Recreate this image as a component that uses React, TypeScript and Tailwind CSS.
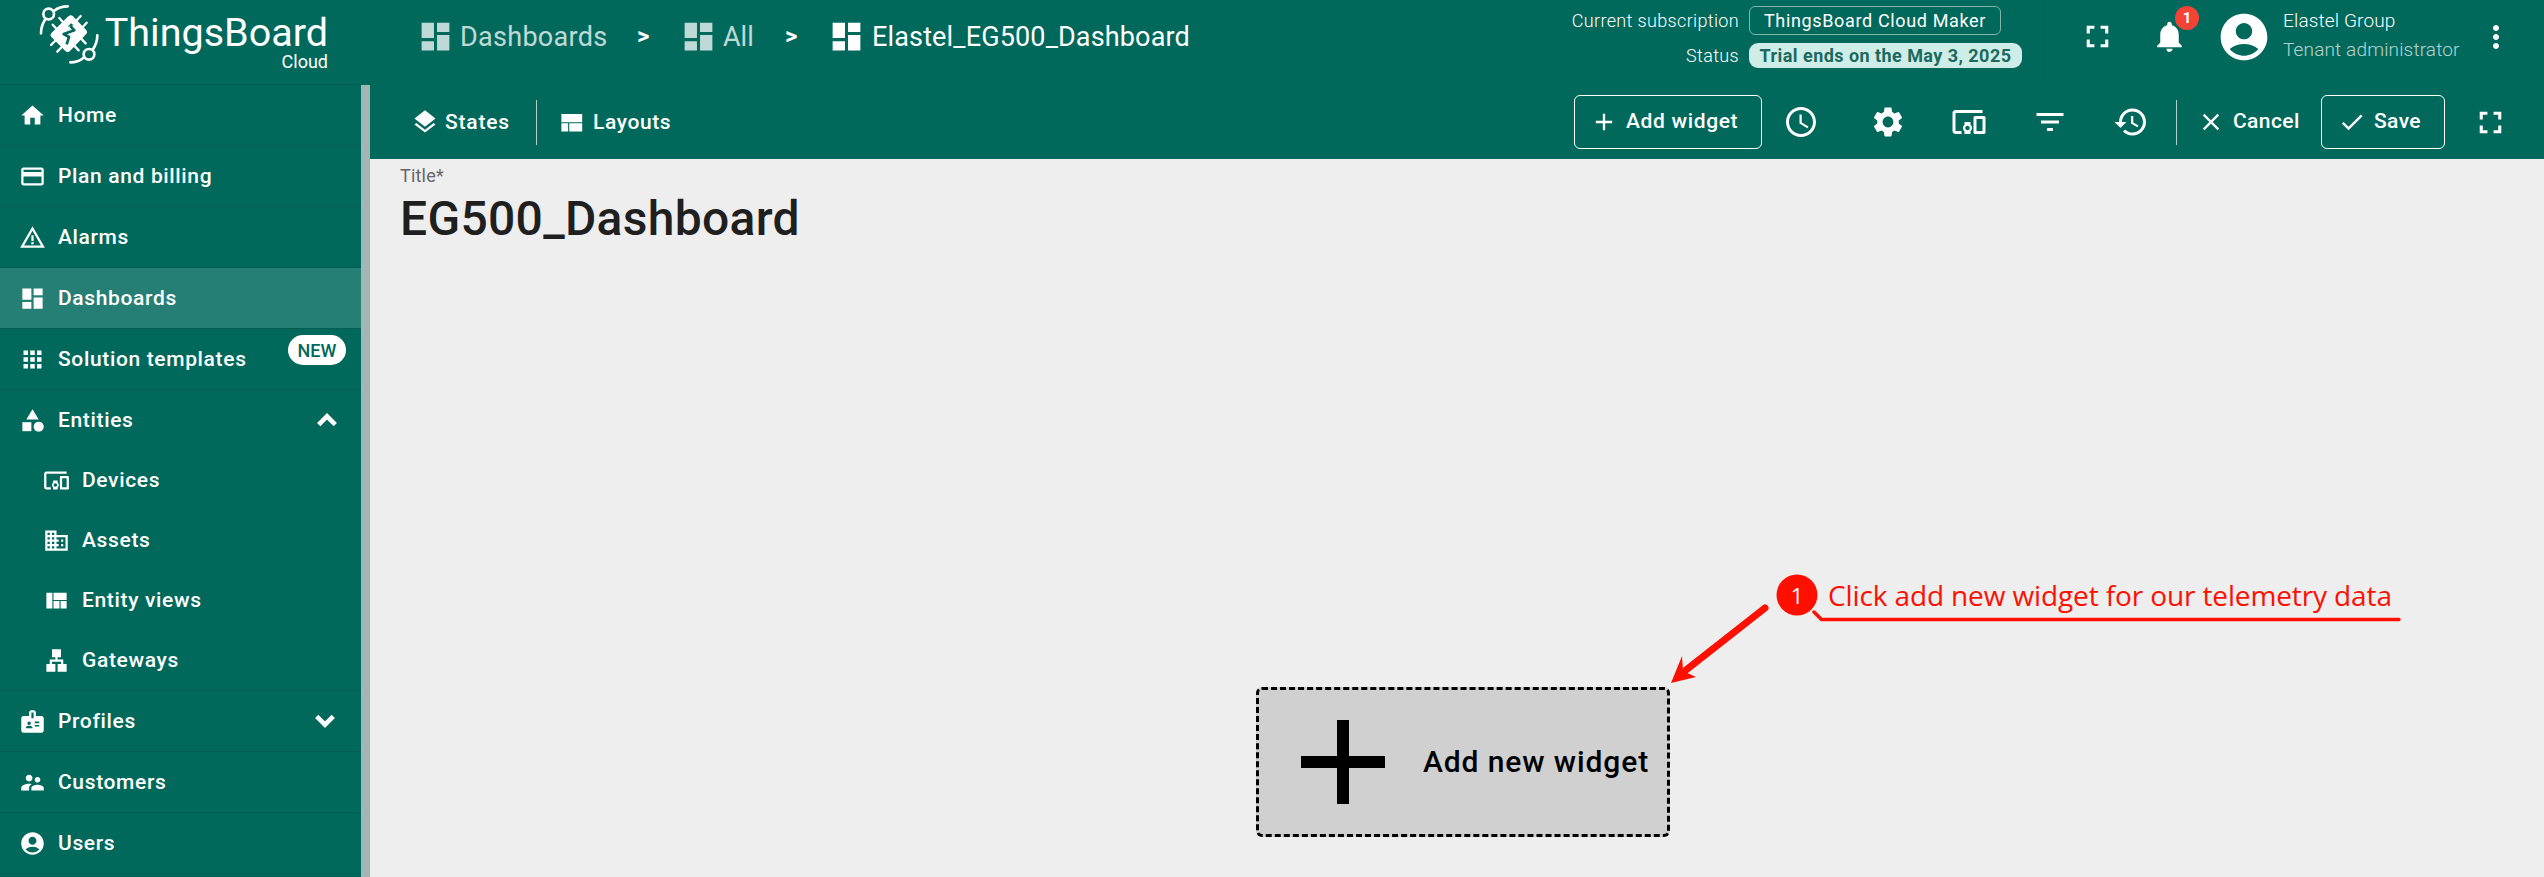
import type { ReactNode } from "react";
import type { IconType } from "react-icons";
import {
  MdAccountCircle,
  MdAdd,
  MdApps,
  MdBadge,
  MdCategory,
  MdCheck,
  MdClose,
  MdDashboard,
  MdDevicesOther,
  MdDomain,
  MdFilterList,
  MdFullscreen,
  MdHistory,
  MdHome,
  MdLan,
  MdLayers,
  MdMoreVert,
  MdNotifications,
  MdPayment,
  MdSchedule,
  MdSettings,
  MdSupervisorAccount,
  MdViewQuilt,
  MdWarningAmber,
} from "react-icons/md";

function Logo() {
  return (
    <div className="flex h-[85px] w-[361px] shrink-0 border-b border-[#005e50] pl-[37px]">
      <svg className="mt-[2px] h-[64px] w-[64px] shrink-0" viewBox="111 6 192 192" fill="none" stroke="white" strokeLinecap="round">
        <g strokeWidth="8">
          <circle cx="146" cy="42" r="16" />
          <circle cx="267" cy="163" r="16" />
          <path d="M123 100C123 84 128 70 136 58" />
          <path d="M163 32C174 23 188 19 203 19" />
          <path d="M292 106C292 123 287 137 278 149" />
          <path d="M211 187C227 187 240 182 251 173" />
        </g>
        <path
          strokeWidth="7"
          d="M178 54L196 74M158 74L176 94M242 48L222 70M260 68L238 92M153 135L174 114M172 155L194 132M222 136L236 151M240 112L257 130"
        />
        <path d="M205 49Q212 43 219 49L258 89Q265 96 258 103L210 153Q203 160 196 153L155 112Q148 105 155 98Z" fill="white" stroke="none" />
        <path d="M211 78L223 91L191 102L207 111L200 133" stroke="#00695c" strokeWidth="8" strokeLinecap="butt" strokeLinejoin="round" />
        <path d="M203 80L213 70L221 76Z" fill="#00695c" stroke="none" />
      </svg>
      <div className="flex w-[227px] flex-col items-end pt-[13px] text-white">
        <span className="text-[39.5px] leading-[40px]">ThingsBoard</span>
        <span className="text-[18px] leading-[17px]">Cloud</span>
      </div>
    </div>
  );
}

function Chevron({ up = false }: { up?: boolean }) {
  return (
    <svg className={up ? "mr-[24px] h-[14px] w-[20px]" : "mr-[26px] h-[14px] w-[20px]"} viewBox="0 0 20 14" fill="none" stroke="white" strokeWidth="4.6">
      <path d={up ? "M1.7 11.6L10 3.3L18.3 11.6" : "M1.7 2.4L10 10.7L18.3 2.4"} />
    </svg>
  );
}

type NavProps = {
  icon: IconType;
  label: string;
  active?: boolean;
  child?: boolean;
  line?: boolean;
  children?: ReactNode;
};

function NavItem({ icon: Icon, label, active, child, line = true, children }: NavProps) {
  return (
    <div
      className={`flex shrink-0 items-center ${line ? "h-[61px] border-b border-[#005e50]" : "h-[60px]"} ${active ? "bg-[#267f74]" : ""} ${child ? "pl-[43px]" : "pl-[19px]"}`}
    >
      <Icon className="size-[27px] shrink-0" />
      <span className="ml-[12px] grow pt-[2px] text-[21px] font-medium tracking-[0.65px] whitespace-nowrap">{label}</span>
      {children}
    </div>
  );
}

function Sidebar() {
  return (
    <aside className="flex h-[877px] w-[370px] shrink-0 flex-col overflow-hidden">
      <Logo />
      <div className="flex min-h-0 grow">
        <nav className="flex w-[361px] flex-col overflow-hidden">
          <NavItem icon={MdHome} label="Home" />
          <NavItem icon={MdPayment} label="Plan and billing" />
          <NavItem icon={MdWarningAmber} label="Alarms" />
          <NavItem icon={MdDashboard} label="Dashboards" active />
          <NavItem icon={MdApps} label="Solution templates">
            <span className="mr-[15px] mb-[19px] flex h-[30px] w-[58px] items-center justify-center rounded-full bg-white pt-px text-[18px] font-medium text-[#00695c]">
              NEW
            </span>
          </NavItem>
          <NavItem icon={MdCategory} label="Entities" line={false}>
            <Chevron up />
          </NavItem>
          <NavItem icon={MdDevicesOther} label="Devices" child line={false} />
          <NavItem icon={MdDomain} label="Assets" child line={false} />
          <NavItem icon={MdViewQuilt} label="Entity views" child line={false} />
          <NavItem icon={MdLan} label="Gateways" child />
          <NavItem icon={MdBadge} label="Profiles">
            <Chevron />
          </NavItem>
          <NavItem icon={MdSupervisorAccount} label="Customers" />
          <NavItem icon={MdAccountCircle} label="Users" />
        </nav>
        <div className="w-[9px] bg-[#a2b6b4]" />
      </div>
    </aside>
  );
}

function Header() {
  return (
    <header className="flex h-[85px] shrink-0 text-white">
      <div className="flex h-[73px] w-[1175px] items-center pl-[47px] text-[27px]">
        <div className="flex w-[220px] items-center opacity-75">
          <MdDashboard className="size-[37px]" />
          <span className="ml-[6px] pt-[2px] tracking-[0.3px]">Dashboards</span>
        </div>
        <span className="w-[43px] pb-[2px] text-[24px] leading-[30px] font-bold">&gt;</span>
        <div className="flex w-[105px] items-center opacity-75">
          <MdDashboard className="size-[37px]" />
          <span className="ml-[6px] pt-[2px]">All</span>
        </div>
        <span className="w-[43px] pb-[2px] text-[24px] leading-[30px] font-bold">&gt;</span>
        <MdDashboard className="size-[37px]" />
        <span className="ml-[7px] pt-[2px] tracking-[0.15px]">Elastel_EG500_Dashboard</span>
      </div>
      <div className="flex w-[501px] flex-col border-r border-[#006156] pt-[6px]">
        <div className="flex h-[29px] items-center">
          <span className="w-[194px] text-right text-[18px] font-light tracking-[0.35px]">Current subscription</span>
          <span className="ml-[10px] flex h-[29px] w-[252px] items-center justify-center rounded-[6px] border border-[#80b4ad] text-[18px] tracking-[0.65px]">
            ThingsBoard Cloud Maker
          </span>
        </div>
        <div className="mt-[8px] flex h-[25px] items-center">
          <span className="w-[194px] text-right text-[18px] font-light tracking-[0.35px]">Status</span>
          <span className="ml-[10px] flex h-[25px] w-[273px] items-center justify-center rounded-[9px] bg-[#cdede6] text-[18px] font-bold tracking-[0.45px] text-[#1b695e]">
            Trial ends on the May 3, 2025
          </span>
        </div>
      </div>
      <div className="flex h-[73px] items-center pl-[33px]">
        <MdFullscreen className="size-[37px]" />
        <div className="relative ml-[35px]">
          <MdNotifications className="size-[37px]" />
          <span className="absolute -top-[12px] left-[24px] flex size-[24px] items-center justify-center rounded-full bg-[#f44336] text-[15px] font-bold">
            1
          </span>
        </div>
        <MdAccountCircle className="ml-[28px] size-[56px]" />
        <div className="ml-[11px] flex w-[195px] flex-col pb-[3px] text-[19px] leading-[29px] font-light tracking-[0.15px]">
          <span>Elastel Group</span>
          <span className="opacity-70">Tenant administrator</span>
        </div>
        <MdMoreVert className="size-[36px]" />
      </div>
    </header>
  );
}

function Toolbar() {
  return (
    <div className="flex h-[74px] shrink-0 items-center text-[21px] font-medium tracking-[0.4px] text-white">
      <div className="flex w-[166px] items-center pl-[41px]">
        <MdLayers className="size-[28px]" />
        <span className="ml-[6px] pt-px tracking-[0.8px]">States</span>
      </div>
      <div className="h-[45px] w-px bg-[#b3d2ce]" />
      <div className="flex w-[1037px] items-center pl-[21px]">
        <svg className="size-[27px]" viewBox="0 0 24 24" fill="currentColor">
          <path d="M3 4.5h18.5v7.2H3zM3 12.7h6v7.3H3zM10 12.7h11.500v7.3H10z" />
        </svg>
        <span className="ml-[8px] pt-px tracking-[0.6px]">Layouts</span>
      </div>
      <div className="flex h-[54px] w-[188px] items-center rounded-[6px] border border-white pl-[15px]">
        <MdAdd className="size-[28px]" />
        <span className="ml-[8px] tracking-[0.65px]">Add widget</span>
      </div>
      <MdSchedule className="ml-[21px] size-[36px]" />
      <MdSettings className="ml-[51px] size-[36px]" />
      <MdDevicesOther className="ml-[45px] size-[36px]" />
      <MdFilterList className="ml-[45px] size-[36px]" />
      <MdHistory className="ml-[45px] size-[36px]" />
      <div className="ml-[27px] h-[45px] w-px bg-[#b3d2ce]" />
      <MdClose className="ml-[20px] size-[28px]" />
      <span className="ml-[8px] w-[88px]">Cancel</span>
      <div className="flex h-[54px] w-[124px] items-center rounded-[6px] border border-white pl-[16px]">
        <MdCheck className="size-[28px]" />
        <span className="ml-[8px]">Save</span>
      </div>
      <MdFullscreen className="ml-[27px] size-[37px]" />
    </div>
  );
}

function Annotation() {
  return (
    <div className="absolute top-[410px] left-[1290px] h-[130px] w-[760px]">
      <svg className="absolute inset-0 h-[130px] w-[760px]" viewBox="1660 569 760 130" fill="none">
        <path d="M1765 608L1686 670" stroke="#ff0f00" strokeWidth="7" strokeLinecap="round" />
        <path d="M1671 683L1682 656L1683 671L1696 677Z" fill="#ff0f00" />
        <path d="M1814 612L1821.500 619.500H2399" stroke="#ff0f00" strokeWidth="3.500" strokeLinecap="round" />
        <circle cx="1797" cy="595" r="20.500" fill="#ff0f00" />
      </svg>
      <span className="absolute top-[6px] left-[117px] flex size-[40px] items-center justify-center font-['Open_Sans',sans-serif] text-[22px] text-white">
        1
      </span>
      <span className="absolute top-[6px] left-[168px] font-['Open_Sans',sans-serif] text-[28px] leading-[40px] tracking-[-0.12px] whitespace-nowrap text-[#ff0f00]">
        Click add new widget for our telemetry data
      </span>
    </div>
  );
}

export default function App() {
  return (
    <div className="flex h-[877px] w-[2544px] overflow-hidden bg-[#00695c] font-[Roboto,sans-serif] text-white">
      <Sidebar />
      <div className="flex grow flex-col">
        <Header />
        <Toolbar />
        <main className="relative flex grow flex-col bg-[#eeeeee] pt-[5px] pl-[30px]">
          <span className="text-[18px] leading-[24px] tracking-[0.2px] text-[#666666]">Title*</span>
          <span className="mt-[3px] text-[48px] leading-[56px] font-medium tracking-[0.3px] text-[#1f1f1f]">EG500_Dashboard</span>
          <button className="mt-[440px] ml-[856px] flex h-[150px] w-[414px] items-center rounded-[6px] border-[3px] border-dashed border-black bg-[#d0d0d0] pl-[12px] text-[30px] font-medium text-black">
            <svg className="h-[144px] w-[144px] shrink-0" viewBox="0 0 144 144">
              <path d="M30 66h84v12h-84zM66 30h12v84h-12z" />
            </svg>
            <span className="ml-[8px] pb-px tracking-[0.9px]">Add new widget</span>
          </button>
          <Annotation />
        </main>
      </div>
    </div>
  );
}
